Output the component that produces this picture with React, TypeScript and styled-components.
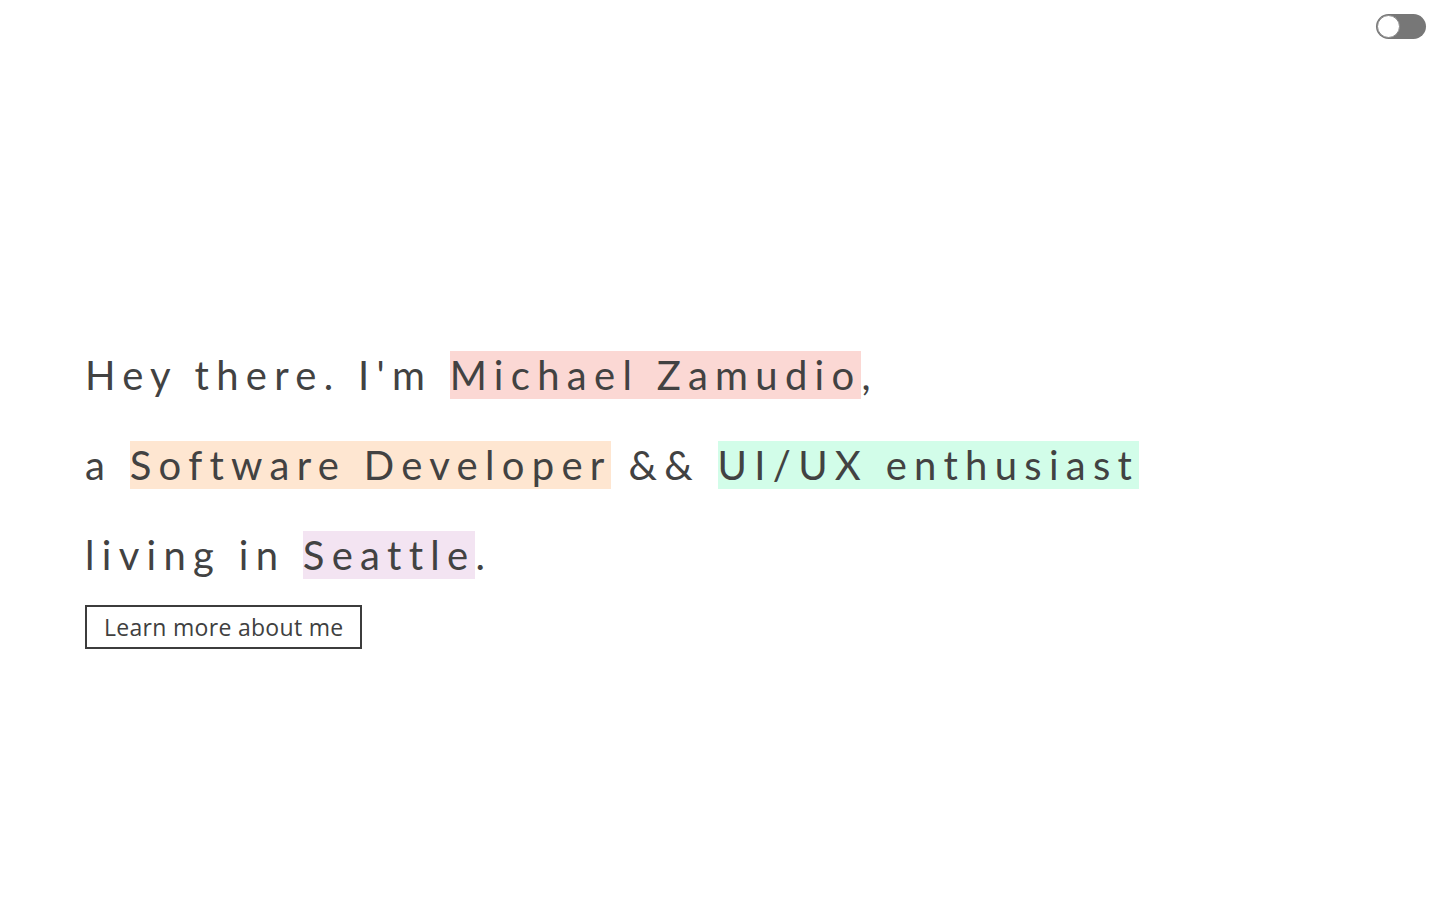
import styled, { createGlobalStyle } from "styled-components";
import { useState } from "react";

const GlobalStyle = createGlobalStyle`
  html, body {
    margin: 0;
    padding: 0;
    background: #ffffff;
    font-family: Lato, "Open Sans", sans-serif;
    color: #424242;
  }
`;

const Page = styled.div`
  position: relative;
  min-height: 900px;
  box-sizing: border-box;
  padding: 330px 85px 0;
`;

const ToggleTrack = styled.button<{ on: boolean }>`
  position: absolute;
  top: 14px;
  right: 14px;
  width: 50px;
  height: 25px;
  border: none;
  padding: 0;
  border-radius: 13px;
  background: #777777;
  cursor: pointer;
`;

const ToggleKnob = styled.span<{ on: boolean }>`
  position: absolute;
  top: 1px;
  left: ${(props) => (props.on ? "26px" : "1px")};
  width: 21px;
  height: 21px;
  border-radius: 50%;
  background: #ffffff;
  border: 1px solid #8a8a8a;
  transition: left 0.2s;
`;

const Intro = styled.div`
  display: flex;
  flex-direction: column;
`;

const Line = styled.div`
  font-size: 40px;
  line-height: 90px;
  letter-spacing: 7.3px;
  white-space: nowrap;
`;

const Mark = styled.span<{ tint: string }>`
  background: ${(props) => props.tint};
`;

const MoreButton = styled.button`
  align-self: flex-start;
  margin-top: 5px;
  height: 44px;
  padding: 0 17px;
  border: 2px solid #3c3c3c;
  background: transparent;
  color: #404040;
  font-family: "Open Sans", Lato, sans-serif;
  font-size: 23px;
  font-weight: 500;
  letter-spacing: 0.3px;
  cursor: pointer;
`;

function App() {
  const [dark, setDark] = useState(false);
  return (
    <>
      <GlobalStyle />
      <Page>
        <ToggleTrack on={dark} onClick={() => setDark((prev) => !prev)} aria-label="toggle theme">
          <ToggleKnob on={dark} />
        </ToggleTrack>
        <Intro>
          <Line>
            Hey there. I'm <Mark tint="#fbd8d4">Michael Zamudio</Mark>,
          </Line>
          <Line>
            a <Mark tint="#fee6d1">Software Developer</Mark> &amp;&amp;{" "}
            <Mark tint="#d2fde9">UI/UX enthusiast</Mark>
          </Line>
          <Line>
            living in <Mark tint="#f3e4f2">Seattle</Mark>.
          </Line>
          <MoreButton>Learn more about me</MoreButton>
        </Intro>
      </Page>
    </>
  );
}

export default App;
